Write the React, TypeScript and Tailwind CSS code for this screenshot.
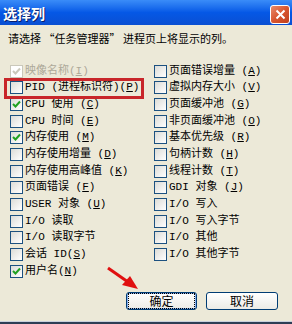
import React from "react";

type Item = { pre: string; key?: string; checked?: boolean; disabled?: boolean };

const left: Item[] = [
  { pre: "映像名称", key: "I", checked: true, disabled: true },
  { pre: "PID (进程标识符)", key: "P" },
  { pre: "CPU 使用 ", key: "C", checked: true },
  { pre: "CPU 时间 ", key: "E" },
  { pre: "内存使用 ", key: "M", checked: true },
  { pre: "内存使用增量 ", key: "D" },
  { pre: "内存使用高峰值 ", key: "K" },
  { pre: "页面错误 ", key: "F" },
  { pre: "USER 对象 ", key: "U" },
  { pre: "I/O 读取" },
  { pre: "I/O 读取字节" },
  { pre: "会话 ID", key: "S" },
  { pre: "用户名", key: "N", checked: true },
];

const right: Item[] = [
  { pre: "页面错误增量 ", key: "A" },
  { pre: "虚拟内存大小 ", key: "V" },
  { pre: "页面缓冲池 ", key: "G" },
  { pre: "非页面缓冲池 ", key: "O" },
  { pre: "基本优先级 ", key: "R" },
  { pre: "句柄计数 ", key: "H" },
  { pre: "线程计数 ", key: "T" },
  { pre: "GDI 对象 ", key: "J" },
  { pre: "I/O 写入" },
  { pre: "I/O 写入字节" },
  { pre: "I/O 其他" },
  { pre: "I/O 其他字节" },
];

const font = { fontFamily: '"Liberation Mono", "Noto Sans CJK SC", monospace' };
const cjk = { fontFamily: '"Noto Sans CJK SC", sans-serif' };

function Box({ checked, disabled }: { checked?: boolean; disabled?: boolean }) {
  return (
    <div
      className={
        "w-[13px] h-[13px] shrink-0 border flex items-center justify-center " +
        (disabled
          ? "border-[#cac8bb] bg-white"
          : "border-[#1c5180] bg-gradient-to-br from-[#dcdcd7] to-white")
      }
    >
      {checked && (
        <svg width="9" height="9" viewBox="0 0 9 9">
          <path
            d="M1 4 L3.5 6.5 L8 1.5"
            fill="none"
            stroke={disabled ? "#cac8bb" : "#21a121"}
            strokeWidth="2"
          />
        </svg>
      )}
    </div>
  );
}

function Row({ it }: { it: Item }) {
  return (
    <div className="h-[16.67px] flex items-center gap-[2px]">
      <Box checked={it.checked} disabled={it.disabled} />
      <span
        className={"text-[11px] leading-none whitespace-pre " + (it.disabled ? "text-[#aca899]" : "text-black")}
        style={font}
      >
        {it.pre}
        {it.key && (
          <>
            (<span className="underline">{it.key}</span>)
          </>
        )}
      </span>
    </div>
  );
}

export default function App() {
  return (
    <div className="w-[292px] h-[324px] bg-[#ece9d8] flex flex-col relative overflow-hidden">
      <div className="h-[25px] shrink-0 bg-gradient-to-b from-[#3a8cf8] via-[#0558e6] to-[#0a4fd2] flex items-center justify-between pl-[3px] pr-[2px]">
        <span
          className="text-white font-bold text-[14px] leading-none [text-shadow:1px_1px_0_#0a1e6a]"
          style={cjk}
        >
          选择列
        </span>
        <div className="w-[20px] h-[19px] mt-[4px] rounded-[3px] border border-white bg-gradient-to-br from-[#e88a6a] via-[#d8552e] to-[#c0401c] flex items-center justify-center">
          <svg width="11" height="11" viewBox="0 0 11 11">
            <path d="M1.5 1.5 L9.5 9.5 M9.5 1.5 L1.5 9.5" stroke="white" strokeWidth="2" />
          </svg>
        </div>
      </div>
      <div className="flex-1 flex flex-col">
        <div className="pl-[8px] pt-[6px] h-[38px] text-[11px] leading-[14px] text-black" style={cjk}>
          请选择 “任务管理器” 进程页上将显示的列。
        </div>
        <div className="flex">
          <div className="w-[144px] pl-[10px] flex flex-col">
            {left.map((it, i) => (
              <Row key={i} it={it} />
            ))}
          </div>
          <div className="pl-[10px] flex flex-col">
            {right.map((it, i) => (
              <Row key={i} it={it} />
            ))}
          </div>
        </div>
        <div className="flex gap-[9px] pl-[126px] mt-[12px]">
          <button
            className="w-[71px] h-[18px] rounded-[3px] border border-[#003c74] bg-gradient-to-b from-white to-[#ecebe6] shadow-[inset_0_0_0_1px_#8ab0ef] flex items-center justify-center text-[12px] leading-none text-black"
            style={cjk}
          >
            <span className="outline outline-1 outline-dotted outline-black outline-offset-[1px] w-[63px] h-[12px] flex items-center justify-center">
              确定
            </span>
          </button>
          <button
            className="w-[72px] h-[18px] rounded-[3px] border border-[#003c74] bg-gradient-to-b from-white to-[#ecebe6] flex items-center justify-center text-[12px] leading-none text-black"
            style={cjk}
          >
            取消
          </button>
        </div>
      </div>
      <div className="h-[1px] bg-[#c8cfdc] shrink-0" />
      <div className="h-[2px] bg-[#2e3d55] shrink-0" />

      <div className="absolute left-[4px] top-[78px] w-[140px] h-[21px] border-[3px] border-[#c8262a] pointer-events-none" />
      <svg className="absolute left-0 top-0 pointer-events-none" width="292" height="324">
        <line x1="108" y1="268" x2="128" y2="282" stroke="#e01010" strokeWidth="3" />
        <polygon points="138,289 122,285 130,276" fill="#e01010" />
      </svg>
    </div>
  );
}
